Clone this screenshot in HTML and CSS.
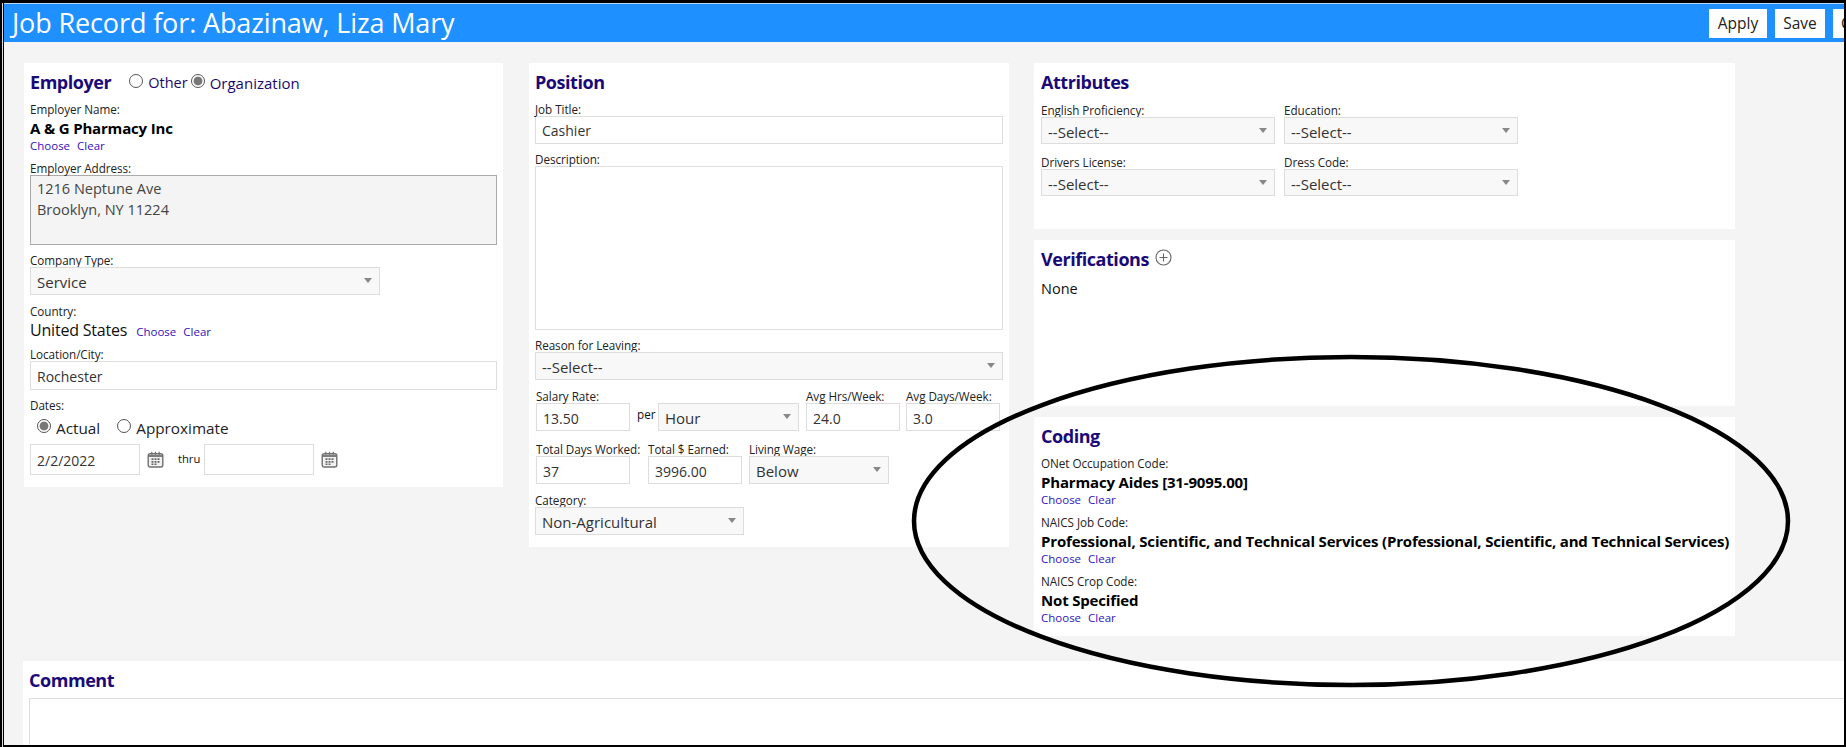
FILE: index.html
```html
<!DOCTYPE html>
<html lang="en">
<head>
    <meta charset="UTF-8">
    <meta name="viewport" content="width=device-width, initial-scale=1.0">
    <title>Job Record</title>
    <link rel="stylesheet" href="styles.css">
</head>
<body>
<div class="window">
    <div class="banner">
        <h1>Job Record for: Abazinaw, Liza Mary</h1>
        <div class="toolbar">
            <button class="btn btn-apply">Apply</button>
            <button class="btn btn-save">Save</button>
            <button class="btn btn-close">Close</button>
        </div>
    </div>

    <div class="content">
        <div class="columns">
            <section class="card card-employer">
                <div class="head-row">
                    <h2>Employer</h2>
                    <label class="radio radio-other"><input type="radio" name="emp">Other</label>
                    <label class="radio radio-org"><input type="radio" name="emp" checked>Organization</label>
                </div>
                <div class="field">
                    <label>Employer Name:</label>
                    <div class="value">A &amp; G Pharmacy Inc</div>
                    <div class="links"><a>Choose</a><a>Clear</a></div>
                </div>
                <div class="field">
                    <label>Employer Address:</label>
                    <div class="address">1216 Neptune Ave<br>Brooklyn, NY 11224</div>
                </div>
                <div class="field">
                    <label>Company Type:</label>
                    <div class="select w-company"><select><option>Service</option></select></div>
                </div>
                <div class="field field-country">
                    <label>Country:</label>
                    <div class="country"><span>United States</span><span class="links"><a>Choose</a><a>Clear</a></span></div>
                </div>
                <div class="field">
                    <label>Location/City:</label>
                    <input class="input input-city" type="text" value="Rochester">
                </div>
                <div class="field">
                    <label>Dates:</label>
                    <div class="date-kind">
                        <label class="radio"><input type="radio" name="dates" checked>Actual</label>
                        <label class="radio"><input type="radio" name="dates">Approximate</label>
                    </div>
                    <div class="date-row">
                        <input class="input input-date" type="text" value="2/2/2022">
                        <svg class="cal" viewBox="0 0 17 17"><use href="#cal-icon"/></svg>
                        <span class="thru">thru</span>
                        <input class="input input-date" type="text">
                        <svg class="cal" viewBox="0 0 17 17"><use href="#cal-icon"/></svg>
                    </div>
                </div>
            </section>

            <section class="card card-position">
                <h2>Position</h2>
                <div class="field">
                    <label>Job Title:</label>
                    <input class="input input-full" type="text" value="Cashier">
                </div>
                <div class="field">
                    <label>Description:</label>
                    <textarea class="desc"></textarea>
                </div>
                <div class="field">
                    <label>Reason for Leaving:</label>
                    <div class="select w-full"><select><option>--Select--</option></select></div>
                </div>
                <div class="pay-row pay-salary">
                    <div class="cell cell-rate">
                        <label>Salary Rate:</label>
                        <input class="input input-num" type="text" value="13.50">
                    </div>
                    <span class="per">per</span>
                    <div class="select w-hour"><select><option>Hour</option></select></div>
                    <div class="cell cell-hrs">
                        <label>Avg Hrs/Week:</label>
                        <input class="input input-num" type="text" value="24.0">
                    </div>
                    <div class="cell cell-avg">
                        <label>Avg Days/Week:</label>
                        <input class="input input-num" type="text" value="3.0">
                    </div>
                </div>
                <div class="pay-row pay-total">
                    <div class="cell cell-days">
                        <label>Total Days Worked:</label>
                        <input class="input input-num" type="text" value="37">
                    </div>
                    <div class="cell cell-earned">
                        <label>Total $ Earned:</label>
                        <input class="input input-num" type="text" value="3996.00">
                    </div>
                    <div class="cell">
                        <label>Living Wage:</label>
                        <div class="select w-wage"><select><option>Below</option></select></div>
                    </div>
                </div>
                <div class="field">
                    <label>Category:</label>
                    <div class="select w-category"><select><option>Non-Agricultural</option></select></div>
                </div>
            </section>

            <div class="stack">
                <section class="card card-attributes">
                    <h2>Attributes</h2>
                    <div class="attr-grid">
                        <div>
                            <label>English Proficiency:</label>
                            <div class="select"><select><option>--Select--</option></select></div>
                        </div>
                        <div>
                            <label>Education:</label>
                            <div class="select"><select><option>--Select--</option></select></div>
                        </div>
                        <div>
                            <label>Drivers License:</label>
                            <div class="select"><select><option>--Select--</option></select></div>
                        </div>
                        <div>
                            <label>Dress Code:</label>
                            <div class="select"><select><option>--Select--</option></select></div>
                        </div>
                    </div>
                </section>

                <section class="card card-verifications">
                    <div class="head-row">
                        <h2>Verifications</h2>
                        <svg class="add" viewBox="0 0 17 17">
                            <circle cx="8.5" cy="8.5" r="7.5" fill="none" stroke="#666" stroke-width="1.1"/>
                            <path d="M8.5 4.5v8M4.5 8.5h8" fill="none" stroke="#666" stroke-width="1.1"/>
                        </svg>
                    </div>
                    <div class="none">None</div>
                </section>

                <section class="card card-coding">
                    <h2>Coding</h2>
                    <div class="field">
                        <label>ONet Occupation Code:</label>
                        <div class="value">Pharmacy Aides [31-9095.00]</div>
                        <div class="links"><a>Choose</a><a>Clear</a></div>
                    </div>
                    <div class="field">
                        <label>NAICS Job Code:</label>
                        <div class="value">Professional, Scientific, and Technical Services (Professional, Scientific, and Technical Services)</div>
                        <div class="links"><a>Choose</a><a>Clear</a></div>
                    </div>
                    <div class="field">
                        <label>NAICS Crop Code:</label>
                        <div class="value">Not Specified</div>
                        <div class="links"><a>Choose</a><a>Clear</a></div>
                    </div>
                </section>
            </div>
        </div>

        <section class="card card-comment">
            <h2>Comment</h2>
            <textarea class="comment"></textarea>
        </section>
    </div>

    <svg class="circled" viewBox="0 0 1840 742">
        <ellipse cx="1347" cy="518" rx="437" ry="164" fill="none" stroke="#000" stroke-width="4.5"/>
    </svg>

    <svg class="defs" width="0" height="0">
        <symbol id="cal-icon" viewBox="0 0 17 17">
            <rect x="1.2" y="2.700" width="14.600" height="13.300" rx="2" fill="#f1f1f1" stroke="#707070" stroke-width="1.4"/>
            <path d="M1.500 5h14" stroke="#707070" stroke-width="1.800"/>
            <path d="M4.800 .8v3M8.500 .8v3M12.200 .8v3" stroke="#707070" stroke-width="1.200"/>
            <path d="M4.500 7.200h2v1.800h-2zM7.500 7.200h2v1.800h-2zM10.500 7.200h2v1.800h-2zM4.500 10h2v1.800h-2zM7.500 10h2v1.800h-2zM10.500 10h2v1.800h-2zM4.500 12.600h2v1.400h-2zM7.500 12.600h2v1.400h-2z" fill="#6a6a6a"/>
        </symbol>
    </svg>
</div>
</body>
</html>
```

FILE: styles.css
```css
* {
    box-sizing: border-box;
}
html, body {
    margin: 0;
    height: 100%;
    overflow: hidden;
}
body {
    font-family: "Open Sans", "Noto Sans", sans-serif;
    color: #111;
}
/* thin light line inside the screenshot's black frame */
body::after {
    content: "";
    position: fixed;
    top: 3px;
    bottom: 0;
    left: 2px;
    width: 1px;
    background-color: #ddd;
}
.window {
    position: relative;
    height: 747px;
    overflow: hidden;
    background-color: #f4f4f4;
    border-style: solid;
    border-color: #000;
    border-width: 3px 2px 2px 4px;
}

/* top bar */
.banner {
    height: 39px;
    display: flex;
    align-items: center;
    justify-content: space-between;
    background-color: #1e90ff;
    border-top: 1px solid #b9d9f5;
    overflow: hidden;
}
.banner h1 {
    margin: -2px 0 0 8px;
    font-size: 27px;
    font-weight: 400;
    color: #fff;
    letter-spacing: -0.13px;
    white-space: nowrap;
}
.toolbar {
    display: flex;
    gap: 8px;
    width: 135px;
    flex-shrink: 0;
}
.btn {
    height: 29px;
    padding: 0;
    border: 0;
    background-color: #fff;
    color: #222;
    font: 15.5px "Open Sans", sans-serif;
    flex-shrink: 0;
}
.btn-apply { width: 58px; }
.btn-save { width: 50px; }
.btn-close { width: 60px; text-align: left; padding-left: 8px; }

/* page body */
.content {
    padding: 21px 0 0 20px;
}
.columns {
    display: flex;
    align-items: flex-start;
}
.card {
    background-color: #fff;
    padding: 8px 6px 12px;
}
.card-employer { width: 479px; height: 424px; margin-right: 26px; }
.card-position { width: 480px; height: 484px; margin-right: 25px; }
.stack {
    width: 701px;
    display: flex;
    flex-direction: column;
    gap: 11px;
}
.stack .card { padding-left: 7px; padding-right: 6px; }
.card-attributes, .card-verifications { height: 166px; }
.card-coding { height: 219px; }
.card-comment {
    margin: 25px -60px 0 -1px;
    height: 90px;
}

h2 {
    margin: 0;
    height: 23px;
    line-height: 23px;
    font-size: 18px;
    font-weight: 700;
    color: #1a0a78;
    letter-spacing: -0.45px;
}
label {
    display: block;
    height: 14px;
    line-height: 14px;
    font-size: 11.7px;
    letter-spacing: -0.05px;
    color: #222;
    white-space: nowrap;
}
.field {
    margin-top: 8px;
}
.field-country { margin-top: 9px; }
.value {
    height: 22px;
    line-height: 24px;
    font-size: 15px;
    font-weight: 700;
    color: #000;
    letter-spacing: -0.17px;
    white-space: nowrap;
}
.links {
    height: 14px;
    margin-top: 1px;
    line-height: 14px;
    font-size: 11.5px;
    color: #3311bb;
}
.links a {
    margin-right: 7px;
}
.address {
    height: 70px;
    padding: 2px 6px;
    background-color: #f4f4f4;
    border: 1px solid #aaa;
    font-size: 14.5px;
    line-height: 21px;
    color: #444;
}
.input, .select select {
    font-family: "Open Sans", sans-serif;
    font-size: 14px;
    color: #333;
    border: 1px solid #ddd;
    border-radius: 0;
    outline: 0;
    padding: 0 6px;
}
.input {
    display: block;
    height: 28px;
    padding-top: 2px;
    background-color: #fff;
}
.input-full { width: 468px; padding-top: 0; }
.input-city { width: 467px; height: 29px; }
.input-date { width: 110px; height: 31px; }
.input-num { width: 94px; }
.select {
    position: relative;
    width: 234px;
    height: 28px;
    flex-shrink: 0;
}
.select select {
    display: block;
    width: 100%;
    height: 100%;
    padding-top: 2px;
    font-size: 15px;
    appearance: none;
    background-color: #f8f8f8;
}
.select::after {
    content: "";
    position: absolute;
    top: 11px;
    right: 8px;
    border-style: solid;
    border-width: 5px 4px 0;
    border-color: #888 transparent transparent;
}
.w-company { width: 350px; }
.w-full { width: 468px; }
.w-hour { width: 141px; margin-right: 7px; margin-top: 14px; }
.w-wage { width: 140px; }
.w-category { width: 209px; }

/* radios */
.head-row {
    display: flex;
    align-items: center;
    height: 23px;
}
.radio {
    display: flex;
    align-items: center;
    height: 22px;
    font-size: 14.5px;
    line-height: 22px;
    letter-spacing: 0;
    color: #222;
}
.radio input {
    appearance: none;
    width: 14px;
    height: 14px;
    margin: 0 5px 4px 0;
    border: 1px solid #555;
    border-radius: 50%;
    background-color: #fff;
}
.radio input:checked {
    background: radial-gradient(circle, #777 0 4px, #fff 4.8px);
}
.head-row .radio { color: #1a0a6b; }
.radio-other { margin-left: 18px; margin-right: 3px; }
.radio-org { font-size: 15px; }
.date-kind {
    display: flex;
    height: 24px;
    align-items: center;
    padding: 8px 0 0 7px;
    gap: 17px;
}
.date-kind .radio { font-size: 15.3px; }
.date-kind .radio input { margin-bottom: 5px; }
.date-row {
    display: flex;
    align-items: center;
    margin-top: 8px;
}
.cal {
    width: 17px;
    height: 17px;
    margin-left: 7px;
}
.thru {
    margin: -3px 2px 0 14px;
    font-size: 11.2px;
    width: 24px;
}
.country {
    display: flex;
    align-items: center;
    height: 21px;
    padding-top: 3px;
    font-size: 16px;
    letter-spacing: -0.2px;
}
.country .links {
    margin: 3px 0 0 9px;
    letter-spacing: 0;
}

/* position card */
.desc {
    display: block;
    width: 468px;
    height: 164px;
    border: 1px solid #ddd;
    background-color: #fff;
    resize: none;
}
.pay-row {
    display: flex;
    padding-left: 1px;
}
.cell {
    flex-shrink: 0;
}
.pay-salary { margin-top: 9px; }
.cell-rate { width: 94px; }
.cell-hrs { width: 100px; }
.cell-avg { width: 94px; }
.pay-total { margin: 11px 0 9px; }
.pay-total + .field { margin-top: 0; }
.cell-days { width: 112px; }
.cell-earned { width: 101px; }
.per {
    width: 28px;
    flex-shrink: 0;
    padding: 17px 0 0 7px;
    font-size: 11.7px;
}

/* attributes */
.attr-grid {
    margin-top: 9px;
    display: grid;
    grid-template-columns: 234px 234px;
    column-gap: 9px;
    row-gap: 11px;
}
.attr-grid .select { height: 27px; }
.add {
    width: 17px;
    height: 17px;
    margin: 0 0 5px 6px;
}
.none {
    margin-top: 8px;
    height: 20px;
    line-height: 20px;
    font-size: 14.5px;
}
.comment {
    display: block;
    width: 100%;
    height: 70px;
    margin-top: 6px;
    border: 1px solid #ddd;
    background-color: #fff;
    resize: none;
}

/* hand drawn mark over the page */
.circled {
    position: absolute;
    left: 0;
    top: 0;
    width: 1840px;
    height: 742px;
    pointer-events: none;
}
.defs {
    position: absolute;
}
```
